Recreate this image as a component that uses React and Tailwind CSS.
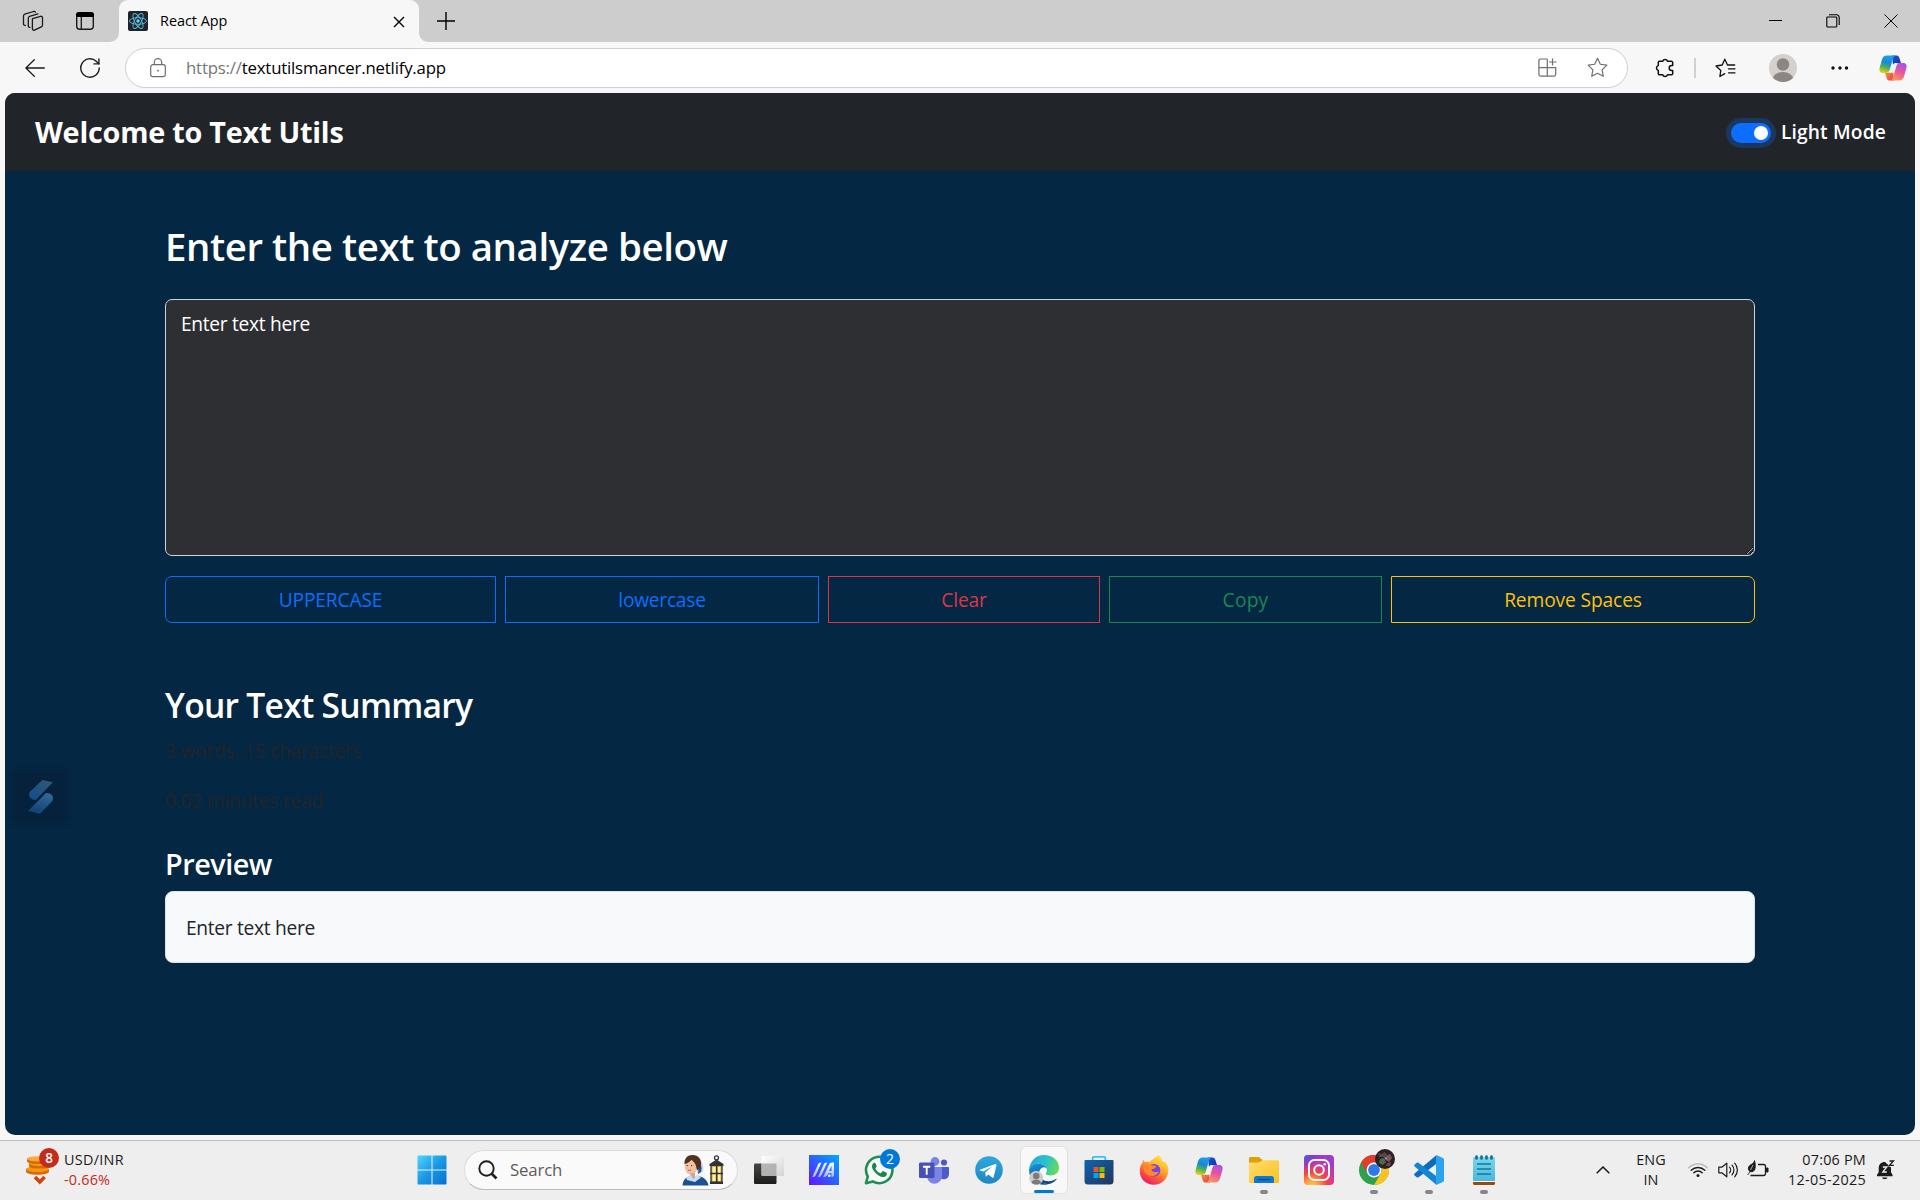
import React from 'react';

/* ---------- brand drawings ---------- */

function Copilot({ id, className }) {
  return (
    <svg viewBox="0 0 28 26" className={className}>
      <defs>
        <linearGradient id={id + 'a'} x1="0.55" y1="0" x2="0.25" y2="1">
          <stop offset="0" stopColor="#1aa0ee" />
          <stop offset="0.4" stopColor="#1b86d8" />
          <stop offset="0.68" stopColor="#4cb454" />
          <stop offset="1" stopColor="#f7cf0c" />
        </linearGradient>
        <linearGradient id={id + 'b'} x1="0.7" y1="0" x2="0.3" y2="1">
          <stop offset="0" stopColor="#a553f0" />
          <stop offset="0.45" stopColor="#e7559c" />
          <stop offset="1" stopColor="#fb9a5c" />
        </linearGradient>
        <linearGradient id={id + 'c'} x1="0" y1="0" x2="1" y2="1">
          <stop offset="0" stopColor="#1b57d8" />
          <stop offset="1" stopColor="#0f2f9f" />
        </linearGradient>
        <linearGradient id={id + 'd'} x1="0" y1="0" x2="1" y2="1">
          <stop offset="0" stopColor="#f9a13a" />
          <stop offset="1" stopColor="#e23a4e" />
        </linearGradient>
      </defs>
      <path d="M13 0.4h4.6c1.600 0 2.300 1 2.800 2.600l1.600 5.300h-4c-2 0-3.200 1-3.900 3z" fill={`url(#${id}c)`} />
      <path d="M15 25.600h-4.600c-1.600 0-2.300-1-2.800-2.600L6 17.700h4c2 0 3.200-1 3.900-3z" fill={`url(#${id}d)`} />
      <path d="M7.800 0.400h9c-1.600 0.300-2.300 1.600-2.800 3.200l-3.200 11c-0.700 2.300-1.800 3.400-3.800 3.400H3.400C0.600 18-0.100 15.700.700 12.600L3 4.500C3.800 1.800 5.300 0.400 7.800 0.400z" fill={`url(#${id}a)`} />
      <path d="M20.200 25.600h-9c1.600-0.300 2.300-1.600 2.800-3.200l3.200-11c0.700-2.300 1.800-3.400 3.800-3.400h3.600c2.800 0 3.500 2.300 2.700 5.400L25 21.500c-0.800 2.700-2.300 4.100-4.800 4.100z" fill={`url(#${id}b)`} />
      <path d="M14.300 9.300c.6-.9 1.500-1.300 2.600-1.300h1.300c-.6.700-1 1.600-1.400 3l-2 6.800c-.9 0-2.400.1-4.300.1.500-.8.800-1.700 1.100-2.700z" fill="#f3f3f3" />
    </svg>
  );
}

function ReactFavicon() {
  return (
    <svg viewBox="0 0 20 20" className="size-5">
      <rect width="20" height="20" rx="2" fill="#20232a" />
      <g fill="none" stroke="#53c1de" strokeWidth="0.9">
        <ellipse cx="10" cy="10" rx="8.500" ry="3.300" />
        <ellipse cx="10" cy="10" rx="8.500" ry="3.300" transform="rotate(60 10 10)" />
        <ellipse cx="10" cy="10" rx="8.500" ry="3.300" transform="rotate(120 10 10)" />
      </g>
      <circle cx="10" cy="10" r="1.700" fill="#61dafb" />
    </svg>
  );
}

function Avatar({ className }) {
  return (
    <svg viewBox="0 0 28 28" className={className}>
      <defs><clipPath id="avc"><circle cx="14" cy="14" r="14" /></clipPath></defs>
      <circle cx="14" cy="14" r="14" fill="#d3d0cd" />
      <g clipPath="url(#avc)" fill="#8b8683">
        <circle cx="14" cy="10.500" r="6.200" />
        <ellipse cx="14" cy="26" rx="10.500" ry="8" />
      </g>
    </svg>
  );
}

/* ---------- browser chrome ---------- */

function TabStrip() {
  return (
    <div className="flex h-[42px] shrink-0 items-center bg-[#cdcdcd]">
      <svg viewBox="0 0 22 22" className="ml-[22px] size-[22px]" fill="none" stroke="#1b1b1b" strokeWidth="1.300" strokeLinejoin="round" strokeLinecap="round">
        <path d="M10.500 8.600 18.600 6.300c1-.3 1.900.4 1.900 1.400v7.600c0 .8-.4 1.300-1.100 1.600l-7 3.200c-1 .4-2-.2-2-1.300v-8.900c0-.7.100-1.100.1-1.300z" />
        <path d="M8 17.300c-1 .2-1.700-.4-1.700-1.400V8.200c0-.9.400-1.500 1.300-1.800l8.300-2.500" />
        <path d="M3.500 15.300c-1.200.3-2-.4-2-1.400V6c0-.9.400-1.500 1.300-1.800L11.500 1.500c1-.2 1.500 0 1.900.6" />
      </svg>
      <svg viewBox="0 0 20 20" className="ml-[31px] size-5">
        <rect x="1.700" y="1.700" width="16.600" height="16.600" rx="3" fill="none" stroke="#1b1b1b" strokeWidth="1.400" />
        <path d="M1 6V4a3 3 0 0 1 3-3h12a3 3 0 0 1 3 3v2z" fill="#000" />
        <path d="M6.300 6v12" stroke="#1b1b1b" strokeWidth="1.300" />
      </svg>
      <svg viewBox="0 0 10 10" className="ml-[14px] size-[10px] self-end"><path d="M10 0v10H0c6 0 10-4 10-10z" fill="#f7f7f7" /></svg>
      <div className="flex h-full w-[300px] items-center rounded-t-[9px] bg-[#f7f7f7] pl-[9px]">
        <ReactFavicon />
        <span className="ml-3 w-[233px] pb-px text-[14.400px] leading-5 text-black">React App</span>
        <svg viewBox="0 0 12 12" className="size-3 shrink-0 translate-y-px" stroke="#000" strokeWidth="1.400"><path d="M1 1l10 10M11 1 1 11" /></svg>
      </div>
      <svg viewBox="0 0 10 10" className="size-[10px] self-end"><path d="M0 0v10h10C4 10 0 6 0 0z" fill="#f7f7f7" /></svg>
      <svg viewBox="0 0 18 18" className="ml-[8px] size-[18px]" stroke="#000" strokeWidth="1.400"><path d="M9 0v18M0 9h18" /></svg>
      <svg viewBox="0 0 14 14" className="ml-auto size-[14px]" stroke="#000" strokeWidth="1" shapeRendering="crispEdges"><path d="M0.500 6.500h13" /></svg>
      <svg viewBox="0 0 14 14" className="ml-11 size-[14px]" fill="none" stroke="#000" strokeWidth="1.100">
        <rect x="0.800" y="3" width="10" height="10" rx="0.800" />
        <path d="M3 0.800h7.700a2.500 2.500 0 0 1 2.500 2.500V11" />
      </svg>
      <svg viewBox="0 0 14 14" className="mr-[22px] ml-11 size-[14px]" stroke="#000" strokeWidth="1"><path d="M0.500 0.500l13 13M13.500 0.500l-13 13" /></svg>
    </div>
  );
}

const STAR = 'M10 1.200 12.700 6.900l6.200.9-4.500 4.400 1.100 6.200L10 15.500l-5.500 2.900 1.100-6.200L1.100 7.800l6.200-.9z';

function AddressBar() {
  return (
    <div className="flex h-[51px] shrink-0 items-center bg-[#f7f7f7]">
      <svg viewBox="0 0 20 18" className="ml-[25px] h-[18px] w-5" fill="none" stroke="#1b1b1b" strokeWidth="1.300" strokeLinecap="round" strokeLinejoin="round"><path d="M19.300 9H1M9.300.8.900 9l8.400 8.200" /></svg>
      <svg viewBox="0 0 20 20" className="ml-[35px] size-5" fill="none" stroke="#1b1b1b" strokeWidth="1.400" strokeLinecap="round">
        <path d="M19.200 10a9.200 9.200 0 1 1-3-6.800l2.600 2.500" /><path d="M18.900 1v4.900H14" />
      </svg>
      <div className="ml-[25px] flex h-10 w-[1503px] items-center rounded-full border border-[#cfcfcf] bg-white">
        <svg viewBox="0 0 16 20" className="ml-6 h-5 w-4" fill="none" stroke="#6e6e6e" strokeWidth="1.200">
          <rect x="0.700" y="6.700" width="14.600" height="12" rx="2.200" /><path d="M4.300 6.500V4.300a3.700 3.700 0 0 1 7.400 0v2.200" /><circle cx="8" cy="12.700" r="0.900" fill="#6e6e6e" stroke="none" />
        </svg>
        <span className="ml-5 text-[16.800px] leading-6 tracking-[-0.190px] text-black"><span className="text-[#767676]">https://</span>textutilsmancer.netlify.app</span>
        <svg viewBox="0 0 19 19" className="ml-auto size-[19px]" fill="none" stroke="#6e6e6e" strokeWidth="1.200">
          <path d="M9.300 1H2.700A1.800 1.800 0 0 0 .9 2.800v13.500a1.800 1.800 0 0 0 1.800 1.800h13.200a1.800 1.800 0 0 0 1.800-1.800V9.700H.9M9.300 1v17.100M14.500.5v7M11 4h7.500" />
        </svg>
        <svg viewBox="0 0 20 20" className="mr-[19px] ml-[30px] size-[21px]" fill="none" stroke="#6e6e6e" strokeWidth="1.150" strokeLinejoin="round"><path d={STAR} /></svg>
      </div>
      <svg viewBox="0 0 20 20" className="ml-[27px] size-5" fill="none" stroke="#111" strokeWidth="1.500" strokeLinejoin="round">
        <path d="M4.500 3.300h3.200a2.500 2.500 0 0 1 4.800 0h3.900a1.300 1.300 0 0 1 1.300 1.300v2.900h-1a2.500 2.500 0 0 0 0 5h1v2.900a1.300 1.300 0 0 1-1.300 1.300h-3.900a2.500 2.500 0 0 1-4.800 0H4.500a1.200 1.200 0 0 1-1.200-1.200v-3.100a2.500 2.500 0 0 1 0-4.800V4.500a1.200 1.200 0 0 1 1.200-1.200z" />
      </svg>
      <div className="ml-[19px] h-5 w-0.5 bg-[#cfcfcf]" />
      <svg viewBox="0 0 21 20" className="ml-[19px] h-5 w-[21px]" fill="none" stroke="#111" strokeWidth="1.300" strokeLinejoin="round" strokeLinecap="round">
        <path d="M9.700 15.600 4.900 18.500 5.800 12.400 1 8l6.200-1L9.800 1.200 12.500 7h7.200M13.500 10.800h6.500M13.500 14.800h6.500" />
      </svg>
      <Avatar className="ml-[33px] size-7" />
      <svg viewBox="0 0 18 4" className="ml-[34px] h-1 w-[18px]" fill="#111"><circle cx="2" cy="2" r="1.700" /><circle cx="9" cy="2" r="1.700" /><circle cx="15.500" cy="2" r="1.700" /></svg>
      <Copilot id="cp1" className="ml-[30px] h-[26px] w-7" />
    </div>
  );
}

/* ---------- web page ---------- */

function Page() {
  return (
    <div className="relative mx-[5px] flex h-[1042px] shrink-0 flex-col overflow-hidden rounded-[10px] bg-[#042743]">
      <nav className="flex h-[78px] shrink-0 items-center bg-[#212529] pr-[29px] pl-[30px] text-white">
        <h1 className="text-[28.800px] leading-9 font-bold tracking-[-0.230px]">Welcome to Text Utils</h1>
        <div className="ml-auto flex items-center pt-0.5">
          <span className="flex h-5 w-10 items-center justify-end rounded-full bg-[#0d6efd] pr-[3px] ring-5 ring-[#0d6efd]/25"><span className="size-[14px] rounded-full bg-white" /></span>
          <span className="ml-[10px] -translate-y-px text-[19.200px] leading-[30px] font-semibold tracking-[0.150px]">Light Mode</span>
        </div>
      </nav>
      <main className="mx-[160px] flex flex-col text-[19.200px]">
        <h2 className="mt-[51px] text-[38.400px] leading-[48px] font-semibold tracking-[-0.430px] text-white">Enter the text to analyze below</h2>
        <textarea readOnly value="Enter text here" className="mt-[29px] h-[257px] resize-y rounded-[7px] border border-[#ced4da] bg-[#2d2f33] px-[15px] pt-[9px] leading-[30px] tracking-[-0.300px] text-white outline-none" />
        <div className="mt-5 grid h-[47px] grid-cols-[331px_314px_272px_273px_364px] gap-x-[9px]">
          <button className="rounded-l-[7px] border border-[#0d6efd] pt-0.5 tracking-[-0.150px] text-[#0d6efd]">UPPERCASE</button>
          <button className="border border-[#0d6efd] pt-0.5 tracking-[-0.250px] text-[#0d6efd]">lowercase</button>
          <button className="border border-[#dc3545] pt-0.5 tracking-[-0.150px] text-[#dc3545]">Clear</button>
          <button className="border border-[#198754] pt-0.5 tracking-[0.200px] text-[#198754]">Copy</button>
          <button className="rounded-r-[7px] border border-[#ffc107] pt-0.5 tracking-[-0.120px] text-[#ffc107]">Remove Spaces</button>
        </div>
        <h3 className="mt-[61px] text-[33.600px] leading-[42px] font-semibold tracking-[-0.720px] text-white">Your Text Summary</h3>
        <p className="mt-[10px] leading-[30px] tracking-[-0.240px] text-[#212529]">3 words, 15 characters</p>
        <p className="mt-5 leading-[30px] tracking-[-0.220px] text-[#212529]">0.02 minutes read</p>
        <h4 className="mt-[30px] text-[28.800px] leading-9 font-semibold tracking-[-0.480px] text-white">Preview</h4>
        <div className="mt-[9px] flex h-[72px] items-center rounded-[8px] border border-[#dee2e6] bg-[#f8f9fa] pt-px pl-5 leading-[30px] tracking-[-0.300px] text-[#212529]">Enter text here</div>
      </main>
      <div className="absolute top-[679px] left-[10px] size-[50px] rounded-[6px] bg-[#06213b] pt-[7px] pl-3 shadow-[0_0_5px_2px_rgba(6,33,59,0.700)]">
        <svg viewBox="0 0 28 36" className="h-9 w-7">
          <defs>
            <linearGradient id="sg1" x1="0.700" y1="0" x2="0.300" y2="1"><stop offset="0" stopColor="#2f5675" /><stop offset="1" stopColor="#134f8c" /></linearGradient>
            <linearGradient id="sg2" x1="0.700" y1="0" x2="0.300" y2="1"><stop offset="0" stopColor="#336795" /><stop offset="1" stopColor="#0f4275" /></linearGradient>
          </defs>
          <path d="M15.300 1 26 3.300 8.700 21C3.500 21.300.5 16.500 3 12.800z" fill="url(#sg1)" />
          <path d="M19 14c5.500-.5 8.500 4 6.300 8L13 34.700 1 32z" fill="url(#sg2)" />
        </svg>
      </div>
    </div>
  );
}

/* ---------- taskbar ---------- */

function Coins() {
  return (
    <svg viewBox="0 0 36 40" className="h-10 w-9">
      <path d="M1 19v2.600c0 1.700 4 3.200 11.500 3.200S24 23.300 24 21.600V19z" fill="#d96c06" /><ellipse cx="12.500" cy="19" rx="11.500" ry="3" fill="#f8990f" />
      <path d="M4 13.500v2.400c0 1.500 4 2.700 10.500 2.700S25 17.400 25 15.900v-2.400z" fill="#d66804" /><ellipse cx="14.500" cy="13.500" rx="10.500" ry="2.600" fill="#f79a1c" />
      <path d="M2 8.800v2.400c0 1.500 4 2.700 10.500 2.700S23 12.700 23 11.200V8.800z" fill="#d66804" /><ellipse cx="12.500" cy="8.800" rx="10.500" ry="2.600" fill="#fba938" />
      <path d="M10 27l4.800 5 4.800-5" fill="none" stroke="#d2420f" strokeWidth="3.600" />
    </svg>
  );
}

function WindowsLogo() {
  return (
    <svg viewBox="0 0 30 30" className="size-[30px]">
      <defs><linearGradient id="win" x1="0" y1="0" x2="1" y2="1"><stop offset="0" stopColor="#4fd4ff" /><stop offset="0.500" stopColor="#1a98e4" /><stop offset="1" stopColor="#0670cf" /></linearGradient></defs>
      <path d="M1.500.5H14.500V14.500H.5V1.500a1 1 0 0 1 1-1zM15.500.5h13a1 1 0 0 1 1 1v13h-14zM.5 15.500h14v14h-13a1 1 0 0 1-1-1zM15.500 15.500h14v13a1 1 0 0 1-1 1h-13z" fill="url(#win)" />
    </svg>
  );
}

function NurseAndLamp() {
  return (
    <svg viewBox="0 0 42 32" className="h-8 w-[42px]">
      <path d="M15 5c6 1 7 7 6 13l-5 2-3-8z" fill="#c9dcf2" />
      <path d="M17 9c3 2 3 6 2 9l-3 2z" fill="#35508c" />
      <path d="M3 8c2-4 8-5 11-2 2 3 1.500 9-.5 12-1.500 2-4.500 2.700-7 2C3.500 19 2 13 3 8z" fill="#efc2a2" />
      <path d="M2.500 10C2 4 6 .8 10.500.9 16.500 1 20 5.500 19 11c-.5 2.800-2 4.500-4 5.200C14 12 13.500 9 9.500 5.800 8 8 5 9.500 2.500 10z" fill="#54301f" />
      <circle cx="5.200" cy="11.600" r="0.700" fill="#3a2522" /><circle cx="9.700" cy="11.600" r="0.700" fill="#3a2522" />
      <path d="M6 16.300h3" stroke="#c8605a" strokeWidth="1" />
      <path d="M8 19.500l5-1v5l-4 1z" fill="#dca283" />
      <path d="M.5 31.500C1 26 4 22.500 8.500 22l3 2 4-2c6 .5 10 4 11 9.500z" fill="#1c5292" />
      <path d="M4 23.500 8.500 21l3 3.500 4-4 3.500 3-6 4.500-8-2z" fill="#c7def3" />
      <circle cx="34.500" cy="3.800" r="2" fill="none" stroke="#30343a" strokeWidth="1.300" />
      <path d="M34.500 5.500l7 4.500v2h-14v-2z" fill="#30343a" />
      <path d="M29 12h11v16H29z" fill="#e3aa2d" /><path d="M30.500 13h3v14h-3zM36 13h2.500v14H36z" fill="#fff1ac" />
      <path d="M29 12v16M34.700 12v16M40 12v16M28 19.500h13" stroke="#30343a" strokeWidth="1.300" /><path d="M28 27.500h13V30H28z" fill="#30343a" />
    </svg>
  );
}

function TaskView() {
  return (
    <svg viewBox="0 0 30 30" className="size-[30px]">
      <defs>
        <linearGradient id="tv1" x1="0" y1="0" x2="0" y2="1"><stop offset="0" stopColor="#474744" /><stop offset="1" stopColor="#1d1d1b" /></linearGradient>
        <linearGradient id="tv2" x1="0" y1="0" x2="1" y2="1"><stop offset="0" stopColor="#fff" /><stop offset="1" stopColor="#d4d4d4" /></linearGradient>
      </defs>
      <rect x="0" y="8.500" width="22.500" height="20.500" rx="1.200" fill="url(#tv1)" />
      <rect x="7.500" y="1" width="22.500" height="20" rx="1.200" fill="url(#tv2)" />
      <path d="M7.500 8.500h15V21H8.700a1.200 1.200 0 0 1-1.200-1.200z" fill="#a9a9a9" opacity="0.850" />
    </svg>
  );
}

function MyAsus() {
  return (
    <svg viewBox="0 0 30 30" className="size-[30px]">
      <defs>
        <linearGradient id="asus" x1="1" y1="0" x2="0" y2="1"><stop offset="0" stopColor="#00a8ff" /><stop offset="0.500" stopColor="#2b62ff" /><stop offset="1" stopColor="#6a12ff" /></linearGradient>
        <linearGradient id="asl" x1="0" y1="0" x2="0" y2="1"><stop offset="0" stopColor="#ffffff" /><stop offset="1" stopColor="#a9b6ff" /></linearGradient>
      </defs>
      <path d="M0 0h30v30H0z" fill="url(#asus)" />
      <path d="M3.300 22 8.900 9.800c.7-1.600 1.700-2.300 3.600-2.300L6.900 19.700c-.7 1.600-1.700 2.300-3.600 2.300z" fill="url(#asl)" />
      <path d="M9 22 14.600 9.800c.7-1.600 1.700-2.300 3.600-2.300l-5.600 12.200C11.900 21.300 10.900 22 9 22z" fill="url(#asl)" />
      <path d="M14.200 22 20 9.500c.6-1.300 1.600-2 3.200-2H25V20c0 1.300-.7 2-2.500 2v-3.700h-3.300c-.8 2.500-2 3.700-5 3.700zM20.200 15.900h2.300v-5.200z" fill="url(#asl)" fillRule="evenodd" />
      <circle cx="20.300" cy="20.700" r="1.300" fill="#fff" />
    </svg>
  );
}

function WhatsApp() {
  return (
    <svg viewBox="0 0 30 30" className="size-[30px]">
      <path d="M2 28.200 3.800 21.500A13.200 13.200 0 1 1 8.700 26.400z" fill="#f7faf8" stroke="#1e8f54" strokeWidth="2.600" strokeLinejoin="round" />
      <path d="M10.500 7.800c-.5 0-1 .1-1.500.7-1.800 2-1.300 5 1.500 8.300 3 3.600 6.500 5.700 9.500 5.200 1.700-.3 2.900-1.500 3-3.500 0-.5-.3-.7-.8-1l-2.700-1.300c-.5-.2-.8-.1-1.200.3l-1.200 1.400c-.3.300-.6.400-1 .2-2-.9-3.500-2.300-4.600-4.200-.2-.4-.1-.7.100-1l.9-1.100c.2-.3.300-.6.100-1l-1.200-2.500c-.2-.4-.5-.5-.9-.5z" fill="#1b864e" />
    </svg>
  );
}

function Teams() {
  return (
    <svg viewBox="0 0 30 30" className="size-[30px]">
      <circle cx="25" cy="7.500" r="3.100" fill="#5059c9" /><circle cx="16" cy="6.500" r="4.400" fill="#7b83eb" />
      <path d="M20 12h9c.6 0 1 .4 1 1v6.500a5.200 5.200 0 0 1-10 1.500z" fill="#5059c9" />
      <path d="M8 12h14c.6 0 1 .4 1 1v8a7.500 7.500 0 0 1-15 .5z" fill="#7b83eb" />
      <rect y="7.500" width="15.500" height="15.500" rx="1.300" fill="#4750b5" />
      <path d="M4 11.700h7.300M7.700 11.700v8" stroke="#fff" strokeWidth="1.900" />
    </svg>
  );
}

function Telegram() {
  return (
    <svg viewBox="0 0 30 30" className="size-[30px]">
      <defs><linearGradient id="tg" x1="0" y1="0" x2="0" y2="1"><stop offset="0" stopColor="#2fa9de" /><stop offset="1" stopColor="#1d86c0" /></linearGradient></defs>
      <circle cx="15" cy="15" r="13.800" fill="url(#tg)" />
      <path d="M6 14.800 21.200 9c.8-.3 1.400.2 1.200 1.200l-2.600 11.600c-.2.900-.8 1.100-1.500.7l-4-3-2.400 2.300-.7-4.200 7.300-6.300-9 5.300-3.500-1.100c-.7-.2-.7-.5 0-.7z" fill="#fff" />
    </svg>
  );
}

function Edge() {
  return (
    <svg viewBox="0 0 30 30" className="size-[30px]">
      <defs>
        <linearGradient id="eg1" x1="0" y1="0.300" x2="1" y2="0.600"><stop offset="0" stopColor="#2aa5dc" /><stop offset="0.500" stopColor="#2ac0d0" /><stop offset="1" stopColor="#66dc55" /></linearGradient>
        <linearGradient id="eg2" x1="0" y1="0" x2="0.300" y2="1"><stop offset="0" stopColor="#1897dd" /><stop offset="1" stopColor="#0c56a8" /></linearGradient>
      </defs>
      <path d="M0 14.500C1 6 7 0 15 0c8.500 0 15 5.500 15 12.500 0 5-3.700 8-8.300 8-3 0-5-1-5-2 0-.6 1.200-1.200 1.200-3.300 0-3-3.400-6.500-8.400-6.500C5.500 8.700 2 11 0 14.500z" fill="url(#eg1)" />
      <path d="M0 14.500C1.700 10.700 5 8.700 9.500 8.700c5 0 8.400 3.500 8.400 6 0-1.400-1-2.400-2.800-2.400C12 12.300 10 15.500 10 19c0 6 4.500 10.300 9 10.300C10 31.500 0 26.500 0 14.500z" fill="url(#eg2)" />
      <path d="M10.800 16c-1.500 6 3 10.500 9 10.300 3 0 5.500-1.200 7-2.300.6-.4 1 0 .6.600C23 30.500 14 31 10.500 24z" fill="#114a8c" />
      <circle cx="7.200" cy="23" r="7" fill="#cfccca" /><circle cx="7.200" cy="21" r="3.300" fill="#7f7a77" /><path d="M2.500 27.500c1-4 8.500-4 9.500 0-2.500 2.800-7 2.800-9.500 0z" fill="#7f7a77" />
    </svg>
  );
}

function Store() {
  return (
    <svg viewBox="0 0 30 30" className="size-[30px]">
      <defs><linearGradient id="st" x1="0" y1="0" x2="1" y2="1"><stop offset="0" stopColor="#0d66b3" /><stop offset="1" stopColor="#23345a" /></linearGradient></defs>
      <path d="M8.700 7V2.800c0-.6.400-1 1-1h10.600c.6 0 1 .4 1 1V7" fill="none" stroke="#35c2f1" strokeWidth="1.800" />
      <path d="M1.500 5h27c.6 0 1 .4 1 1v20a3.500 3.500 0 0 1-3.500 3.500H4A3.500 3.500 0 0 1 .5 26V6c0-.6.400-1 1-1z" fill="url(#st)" />
      <path d="M9.500 12h5v5h-5z" fill="#f25022" /><path d="M15.500 12h5v5h-5z" fill="#7fba00" /><path d="M9.500 18h5v5h-5z" fill="#00a4ef" /><path d="M15.500 18h5v5h-5z" fill="#ffb900" />
    </svg>
  );
}

function Firefox() {
  return (
    <svg viewBox="0 0 30 30" className="size-[30px]">
      <defs>
        <linearGradient id="ff1" x1="0.800" y1="0" x2="0.250" y2="1"><stop offset="0" stopColor="#fff04a" /><stop offset="0.350" stopColor="#ffb52c" /><stop offset="0.650" stopColor="#ff6336" /><stop offset="1" stopColor="#ec1268" /></linearGradient>
      </defs>
      <path d="M18.700 0c3 1.500 4.300 4 4.500 6.300 1.500.3 3 .8 4 2 2 3 2.300 5.500 2.100 8C28.800 24 22.500 29.800 15 29.800 7 29.800.8 24 .8 16c0-3.500 1-6.500 2.700-8.500l.3-2.700 2.500 2.400c1.500-.5 3-.5 4.500.1C12 4.500 16 3.500 18.700 0z" fill="url(#ff1)" />
      <circle cx="15" cy="15.300" r="6.300" fill="#7a44dd" />
      <path d="M4.500 10c3-2 5.500-1.500 8 .3 2 .2 3.500.2 4.800 1.200-.8 1.800-3 2.500-5 3 1 2.500 4 3.500 7.500 2-1.500 4.200-6.500 5.800-10.500 3.500C5.500 17.700 4 14 4.500 10z" fill="#ff8a2a" />
    </svg>
  );
}

function Folder() {
  return (
    <svg viewBox="0 0 30 30" className="size-[30px]">
      <defs><linearGradient id="fo" x1="0" y1="0" x2="1" y2="1"><stop offset="0" stopColor="#ffdd6b" /><stop offset="1" stopColor="#fbc123" /></linearGradient></defs>
      <path d="M0 3.500c0-.8.600-1.400 1.400-1.400h8c.6 0 1 .2 1.400.6L13.500 5v6H0z" fill="#dfa006" />
      <path d="M0 7.500h9.500c1 0 1.500-.2 2.200-.9l.9-.8c.4-.4.800-.6 1.400-.6h14.600c.8 0 1.400.6 1.400 1.400V28H0z" fill="url(#fo)" />
      <path d="M5 28v-4.500c0-1.600 1-2.500 2.500-2.500h15c1.500 0 2.500.9 2.500 2.500V28z" fill="#0f78d4" /><path d="M9 24.500h12" stroke="#0a4f92" strokeWidth="1.300" strokeLinecap="round" />
    </svg>
  );
}

function Instagram() {
  return (
    <svg viewBox="0 0 30 30" className="size-[30px]">
      <defs>
        <radialGradient id="ig1" cx="0.270" cy="1.070" r="1"><stop offset="0" stopColor="#ffd65a" /><stop offset="0.250" stopColor="#ff9a3a" /><stop offset="0.500" stopColor="#f5433f" /><stop offset="0.800" stopColor="#c837ab" /><stop offset="1" stopColor="#9b3ccc" /></radialGradient>
        <radialGradient id="ig2" cx="0" cy="0" r="0.500"><stop offset="0" stopColor="#3f6be0" /><stop offset="1" stopColor="#6228d7" stopOpacity="0" /></radialGradient>
      </defs>
      <rect width="30" height="30" rx="4" fill="url(#ig1)" /><rect width="30" height="30" rx="4" fill="url(#ig2)" />
      <g fill="none" stroke="#fff" strokeWidth="2"><rect x="5" y="5" width="20" height="20" rx="5.500" /><circle cx="15" cy="15" r="4.800" /></g><circle cx="20.700" cy="9.300" r="1.300" fill="#fff" />
    </svg>
  );
}

function Chrome() {
  return (
    <svg viewBox="0 0 30 30" className="size-[30px]">
      <circle cx="15" cy="15" r="15" fill="#2da14b" />
      <path d="M2 7.500A15 15 0 0 1 28 7.500H15A7.500 7.500 0 0 0 8.500 18.700z" fill="#e33b2e" />
      <path d="M28 7.500A15 15 0 0 1 15 30l6.500-11.300A7.500 7.500 0 0 0 15 7.500z" fill="#fcc31e" />
      <circle cx="15" cy="15" r="7.400" fill="#fff" /><circle cx="15" cy="15" r="5.900" fill="#3077e8" />
    </svg>
  );
}

function ProfilePhoto() {
  return (
    <svg viewBox="0 0 20 20" className="absolute -top-[6px] left-4 size-5">
      <defs><clipPath id="pp"><circle cx="10" cy="10" r="10" /></clipPath></defs>
      <g clipPath="url(#pp)">
        <path d="M0 0h20v20H0z" fill="#2b2123" /><path d="M3 4l4 1 2-2 3 2-1 3H4z" fill="#5a4548" /><path d="M11 7l4-2 2 4-3 4-3-2z" fill="#7c5560" /><path d="M5 10l4-1 2 4-3 3-4-2z" fill="#4b6a50" /><path d="M12 14l4-1-1 4h-4z" fill="#6b4a44" /><path d="M9 8l3 1-1 2z" fill="#c49aa6" />
      </g>
    </svg>
  );
}

function VSCode() {
  return (
    <svg viewBox="0 0 30 30" className="size-[30px]">
      <path d="M22 0.500 23.500 8 4.500 22.200c-.5.400-1.200.4-1.700 0L.6 20.400c-.6-.5-.6-1.300 0-1.800z" fill="#0a6cbc" />
      <path d="M22 29.500 23.500 22 4.500 7.800c-.5-.4-1.200-.4-1.700 0L.6 9.600c-.6.500-.6 1.300 0 1.800z" fill="#1585d2" />
      <path d="M22 0.300c.2-.2.500-.2.800 0l6 2.700c.7.300 1.200 1 1.200 1.800v20.400c0 .8-.5 1.500-1.200 1.800l-6 2.800c-.3.100-.6.100-.8 0z" fill="#2ba3ee" />
    </svg>
  );
}

function Notepad() {
  return (
    <svg viewBox="0 0 30 30" className="size-[30px]">
      <defs><linearGradient id="np" x1="0" y1="0" x2="0" y2="1"><stop offset="0" stopColor="#7bd6ec" /><stop offset="1" stopColor="#4ab9da" /></linearGradient></defs>
      <path d="M4 24h22v4.500c0 .9-.6 1.500-1.500 1.500h-19c-.9 0-1.500-.6-1.500-1.500z" fill="#9a4a10" /><path d="M4 25h22v2H4z" fill="#fff" />
      <path d="M5.500 2h19c.9 0 1.500.6 1.500 1.500V26H4V3.500C4 2.600 4.600 2 5.500 2z" fill="url(#np)" />
      <path d="M8 9h14M8 14h14M8 19h14" stroke="#0c7ba0" strokeWidth="1.700" />
      <path d="M7.500 1.500v2M12.500 1.500v2M17.500 1.500v2M22.500 1.500v2" stroke="#0e6f94" strokeWidth="2.600" strokeLinecap="round" />
    </svg>
  );
}

function TaskItem({ children, running, active }) {
  return (
    <div className={active ? 'relative flex h-12 w-12 flex-col items-center rounded-[6px] border border-[#e2e2e2] bg-[#f8f8f8] pt-2' : 'relative flex h-12 w-12 flex-col items-center pt-[9px]'}>
      <div className="relative size-[30px]">{children}</div>
      {active && <div className="mt-[5px] h-1 w-5 rounded-full bg-[#0078d7]" />}
      {running && <div className="mt-[5px] h-1 w-2 rounded-full bg-[#868686]" />}
    </div>
  );
}

function Taskbar() {
  return (
    <div className="flex h-[60px] shrink-0 items-center border-t border-[#bdbdbd] bg-[#eeeeee] pb-px text-[14.400px] leading-5 text-[#1b1b1b]">
      <div className="flex w-[417px] items-center">
        <div className="relative ml-[25px] h-10 w-[39px]">
          <Coins />
          <span className="absolute -top-[2px] left-[14px] flex size-5 items-center justify-center rounded-full bg-[#c42b1c] text-[13.500px] font-semibold text-white">8</span>
        </div>
        <div className="flex flex-col">
          <span className="tracking-[0.300px]">USD/INR</span>
          <span className="tracking-[0.200px] text-[#c42b1c]">-0.66%</span>
        </div>
      </div>
      <WindowsLogo />
      <div className="ml-[17px] flex h-10 w-[274px] items-center rounded-full border border-[#dcdcdc] border-b-[#bcbcbc] bg-[#fafafa]">
        <svg viewBox="0 0 20 20" className="ml-[13px] size-5" fill="none" stroke="#1f1f1f" strokeWidth="1.900"><circle cx="8.500" cy="8.500" r="7.200" /><path d="M13.500 13.500 18.500 18.500" strokeWidth="2.600" /></svg>
        <span className="ml-3 text-[16.800px] leading-6 tracking-[-0.150px] text-[#5c5c5c]">Search</span>
        <div className="mr-[13px] ml-auto"><NurseAndLamp /></div>
      </div>
      <div className="ml-[7px] flex gap-[7px]">
        <TaskItem><TaskView /></TaskItem>
        <TaskItem><MyAsus /></TaskItem>
        <TaskItem>
          <WhatsApp />
          <span className="absolute -top-[6px] left-4 flex size-5 items-center justify-center rounded-full bg-[#0078d7] text-[14px] text-white">2</span>
        </TaskItem>
        <TaskItem><Teams /></TaskItem>
        <TaskItem><Telegram /></TaskItem>
        <TaskItem active><Edge /></TaskItem>
        <TaskItem><Store /></TaskItem>
        <TaskItem><Firefox /></TaskItem>
        <TaskItem><Copilot id="cp2" className="m-px mt-[2px] h-[26px] w-7" /></TaskItem>
        <TaskItem running><Folder /></TaskItem>
        <TaskItem><Instagram /></TaskItem>
        <TaskItem running><Chrome /><ProfilePhoto /></TaskItem>
        <TaskItem running><VSCode /></TaskItem>
        <TaskItem running><Notepad /></TaskItem>
      </div>
      <svg viewBox="0 0 14 8" className="ml-[88px] h-2 w-[14px]" fill="none" stroke="#1b1b1b" strokeWidth="1.500"><path d="M0.700 7.300 7 1l6.300 6.300" /></svg>
      <div className="ml-[26px] flex w-[30px] flex-col items-center"><span>ENG</span><span>IN</span></div>
      <svg viewBox="0 0 20 16" className="ml-[22px] h-4 w-5" fill="none" stroke="#1b1b1b" strokeWidth="1.400" strokeLinecap="round">
        <path d="M0.800 5.800a12.800 12.800 0 0 1 18.400 0" stroke="#b5b5b5" /><path d="M3.200 8.300a9.500 9.500 0 0 1 13.600 0M5.800 10.700a6 6 0 0 1 8.400 0" /><circle cx="10" cy="13.500" r="1.500" fill="#1b1b1b" stroke="none" />
      </svg>
      <svg viewBox="0 0 21 16" className="ml-[10px] h-4 w-[21px]" fill="none" stroke="#1b1b1b" strokeWidth="1.200" strokeLinejoin="round" strokeLinecap="round">
        <path d="M0.800 5.200v5.600h3l5 4V1.200l-5 4zM11.500 5.200a4 4 0 0 1 0 5.600M14 3.200a7 7 0 0 1 0 9.600M16.700 1.200a10 10 0 0 1 0 13.600" />
      </svg>
      <svg viewBox="0 0 22 18" className="ml-[8px] h-[18px] w-[22px] -translate-y-px">
        <path d="M11 4.500h5.500a2 2 0 0 1 2 2v7a2 2 0 0 1-2 2h-13" fill="none" stroke="#1b1b1b" strokeWidth="1.300" />
        <path d="M19.500 8h1.500v4h-1.500z" fill="#1b1b1b" stroke="#1b1b1b" />
        <path d="M7.500.5c1 3 1.300 7 0 9.500-1 2-3.500 2.200-5 1.200C.700 9.500 1 7 2.700 5.500 4.500 4 7 3.500 7.500.500zM0.800 15 4 10" fill="#1b1b1b" stroke="#1b1b1b" strokeWidth="0.800" />
        <path d="M3.500 10 6 5" stroke="#eee" strokeWidth="0.700" />
      </svg>
      <div className="ml-[17px] flex w-[80px] flex-col items-end"><span className="tracking-[0.200px]">07:06 PM</span><span className="tracking-[0.300px]">12-05-2025</span></div>
      <svg viewBox="0 0 18 20" className="ml-[11px] h-5 w-[18px]">
        <path d="M8 2c-4.200 0-6.300 2.700-6.300 6.300v4L0 14.800v1.400h15.500v-1.400L14 12.300V7.500z" fill="#1b1b1b" /><path d="M5 17.500h5.500c-.5 2.200-5 2.200-5.500 0z" fill="#1b1b1b" />
        <path d="M5.800 7h4l-4 5h4" fill="none" stroke="#eee" strokeWidth="1.300" /><path d="M11.300 0H18v6.500h-6.700z" fill="#eee" /><path d="M12.500 1h4l-4 4.300h4.300" fill="none" stroke="#1b1b1b" strokeWidth="1.300" />
      </svg>
    </div>
  );
}

export default function App() {
  return (
    <div className="flex h-[1200px] w-[1920px] flex-col overflow-hidden bg-[#f7f7f7] font-['Open_Sans',sans-serif]">
      <TabStrip />
      <AddressBar />
      <Page />
      <div className="h-[5px] shrink-0" />
      <Taskbar />
    </div>
  );
}
